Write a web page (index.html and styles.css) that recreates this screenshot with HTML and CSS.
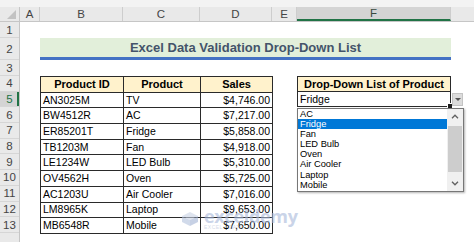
FILE: index.html
```html
<!DOCTYPE html>
<html lang="en">
<head>
    <meta charset="UTF-8">
    <meta name="viewport" content="width=device-width, initial-scale=1.0">
    <title>Excel Data Validation Drop-Down List</title>
    <link rel="stylesheet" href="styles.css">
</head>
<body>
    <div class="excel">
        <div class="colbar">
            <div class="corner"><span class="tri"></span></div>
            <div class="ch w-a">A</div>
            <div class="ch w-b">B</div>
            <div class="ch w-c">C</div>
            <div class="ch w-d">D</div>
            <div class="ch w-e">E</div>
            <div class="ch w-f selected">F</div>
            <div class="ch rest"></div>
        </div>

        <div class="main">
            <div class="rowheads">
                <div class="rh r-s">1</div>
                <div class="rh r-t">2</div>
                <div class="rh r-s">3</div>
                <div class="rh r-n">4</div>
                <div class="rh r-n selected">5</div>
                <div class="rh r-n">6</div>
                <div class="rh r-n">7</div>
                <div class="rh r-n">8</div>
                <div class="rh r-n">9</div>
                <div class="rh r-n">10</div>
                <div class="rh r-n">11</div>
                <div class="rh r-n">12</div>
                <div class="rh r-n">13</div>
                <div class="rh r-last"></div>
            </div>

            <div class="sheet">
                <div class="title">Excel Data Validation Drop-Down List</div>

                <table class="products">
                    <colgroup>
                        <col class="col-b">
                        <col class="col-c">
                        <col class="col-d">
                    </colgroup>
                    <thead>
                        <tr><th>Product ID</th><th>Product</th><th>Sales</th></tr>
                    </thead>
                    <tbody>
                        <tr><td>AN3025M</td><td>TV</td><td class="num">$4,746.00</td></tr>
                        <tr><td>BW4512R</td><td>AC</td><td class="num">$7,217.00</td></tr>
                        <tr><td>ER85201T</td><td>Fridge</td><td class="num">$5,858.00</td></tr>
                        <tr><td>TB1203M</td><td>Fan</td><td class="num">$4,918.00</td></tr>
                        <tr><td>LE1234W</td><td>LED Bulb</td><td class="num">$5,310.00</td></tr>
                        <tr><td>OV4562H</td><td>Oven</td><td class="num">$5,725.00</td></tr>
                        <tr><td>AC1203U</td><td>Air Cooler</td><td class="num">$7,016.00</td></tr>
                        <tr><td>LM8965K</td><td>Laptop</td><td class="num">$9,653.00</td></tr>
                        <tr><td>MB6548R</td><td>Mobile</td><td class="num">$7,650.00</td></tr>
                    </tbody>
                </table>

                <div class="dropdown">
                    <div class="dd-head">Drop-Down List of Product</div>
                    <div class="dd-cell">Fridge<span class="handle"></span></div>
                    <div class="dd-btn"><span class="caret"></span></div>

                    <div class="dd-list">
                        <ul class="options">
                            <li>AC</li>
                            <li class="active">Fridge</li>
                            <li>Fan</li>
                            <li>LED Bulb</li>
                            <li>Oven</li>
                            <li>Air Cooler</li>
                            <li>Laptop</li>
                            <li>Mobile</li>
                        </ul>
                        <div class="scrollbar">
                            <div class="arrow">
                                <svg width="8" height="5" viewBox="0 0 8 5"><path d="M1 4.2 L4 1.2 L7 4.2" fill="none" stroke="#606060" stroke-width="1.3"/></svg>
                            </div>
                            <div class="thumb"></div>
                            <div class="arrow">
                                <svg width="8" height="5" viewBox="0 0 8 5"><path d="M1 0.8 L4 3.8 L7 0.8" fill="none" stroke="#606060" stroke-width="1.3"/></svg>
                            </div>
                        </div>
                    </div>
                </div>

                <div class="watermark">
                    <svg class="logo" width="20" height="16" viewBox="0 0 20 16">
                        <path d="M10 1 L18 5 L10 9 L2 5 Z" fill="#c9d3e6"/>
                        <path d="M2 5 L10 9 L10 15 L2 11 Z" fill="#b4c2dd"/>
                        <path d="M18 5 L10 9 L10 15 L18 11 Z" fill="#a3b3d4"/>
                    </svg>
                    <div class="wm-text">
                        <span class="wm-name">exceldemy</span>
                        <span class="wm-tag">EXCEL · DATA · BI</span>
                    </div>
                </div>
            </div>
        </div>
    </div>
</body>
</html>
```

FILE: styles.css
```css
body {
    margin: 0;
    padding: 0;
    background: #fff;
    font-family: "Liberation Sans", Arial, sans-serif;
    color: #000;
}

.excel {
    width: 474px;
    height: 242px;
    overflow: hidden;
    background: #fff;
}

/* column header bar */
.colbar {
    display: flex;
    height: 22px;
    padding-top: 7px;
    box-sizing: border-box;
    background: #f3f3f3;
    border-bottom: 1px solid #c6c6c6;
}

.corner {
    width: 20px;
    position: relative;
    background: #e9e9e9;
    border-right: 1px solid #c6c6c6;
    box-sizing: border-box;
}

.tri {
    position: absolute;
    right: 3px;
    bottom: 2px;
    width: 0;
    height: 0;
    border-left: 9px solid transparent;
    border-bottom: 9px solid #c2c2c2;
}

.ch {
    display: flex;
    align-items: center;
    justify-content: center;
    box-sizing: border-box;
    background: #e9e9e9;
    border-right: 1px solid #cdcdcd;
    font-size: 11.5px;
    color: #444;
}

.ch.selected {
    background: #d4d4d4;
    border-bottom: 2px solid #217346;
    color: #3a4a40;
}

.ch.rest {
    flex: 1;
    border-right: none;
}

.w-a { width: 20px; }
.w-b { width: 83px; }
.w-c { width: 77px; }
.w-d { width: 72px; }
.w-e { width: 25px; }
.w-f { width: 154px; }

/* body */
.main {
    display: flex;
    height: 220px;
}

.rowheads {
    width: 20px;
    display: flex;
    flex-direction: column;
    background: #e9e9e9;
    border-right: 1px solid #c6c6c6;
    box-sizing: border-box;
}

.rh {
    display: flex;
    align-items: center;
    justify-content: center;
    box-sizing: border-box;
    border-bottom: 1px solid #d6d6d6;
    font-size: 11.5px;
    color: #444;
}

.rh.selected {
    background: #d4d4d4;
    color: #217346;
    box-shadow: inset -2px 0 0 #217346;
}

.r-s { height: 16px; }
.r-t { height: 22px; }
.r-n { height: 15.7px; }
.r-last { flex: 1; border-bottom: none; }

.sheet {
    flex: 1;
    position: relative;
    display: grid;
    grid-template-columns: 20px 83px 77px 72px 25px 154px 1fr;
    grid-template-rows: 16px 22px 16px repeat(10, 15.7px) 1fr;
}

.title {
    grid-column: 2 / 7;
    grid-row: 2;
    display: flex;
    align-items: center;
    justify-content: center;
    box-sizing: border-box;
    background: #e2efda;
    border-bottom: 3px solid #4472c4;
    font-size: 13px;
    font-weight: bold;
    color: #44546a;
}

/* product table */
.products {
    grid-column: 2 / 5;
    grid-row: 4 / 14;
    width: 232px;
    height: 157px;
    border-collapse: collapse;
    table-layout: fixed;
    font-size: 10.5px;
}

.col-b { width: 83px; }
.col-c { width: 77px; }
.col-d { width: 72px; }

.products th,
.products td {
    border: 1px solid #2a2a2a;
    padding: 0 2px;
    height: 14.7px;
    line-height: 13px;
    white-space: nowrap;
    overflow: hidden;
}

.products th {
    background: #fff2cc;
    font-size: 11px;
    font-weight: bold;
    text-align: center;
}

.products td {
    text-align: left;
}

.products td.num {
    text-align: right;
}

/* drop-down cell */
.dropdown {
    grid-column: 6;
    grid-row: 4 / 6;
    position: relative;
}

.dd-head {
    height: 15.7px;
    box-sizing: border-box;
    border: 1px solid #2a2a2a;
    background: #fff2cc;
    font-size: 11px;
    font-weight: bold;
    text-align: center;
    line-height: 14px;
}

.dd-cell {
    position: relative;
    height: 15.7px;
    box-sizing: border-box;
    border: 1px solid #2a2a2a;
    border-top: none;
    padding-left: 2px;
    font-size: 10.5px;
    line-height: 15px;
}

.handle {
    position: absolute;
    right: -3px;
    bottom: -3px;
    width: 4px;
    height: 4px;
    background: #1e1e1e;
    border: 1px solid #fff;
}

.dd-btn {
    position: absolute;
    left: 155px;
    top: 17px;
    width: 11px;
    height: 13px;
    display: flex;
    align-items: center;
    justify-content: center;
    background: #dcdcdc;
    border: 1px solid #c4c4c4;
    box-sizing: border-box;
}

.caret {
    width: 0;
    height: 0;
    border-left: 3px solid transparent;
    border-right: 3px solid transparent;
    border-top: 3px solid #555;
}

.dd-list {
    position: absolute;
    left: 0;
    top: 31.5px;
    width: 167px;
    height: 84px;
    box-sizing: border-box;
    display: flex;
    background: #fff;
    border: 1px solid #777;
    box-shadow: 1px 1px 2px rgba(0, 0, 0, 0.3);
    z-index: 2;
}

.options {
    flex: 1;
    list-style: none;
    margin: 0;
    padding: 0;
    font-size: 9.3px;
}

.options li {
    height: 10.2px;
    line-height: 10.2px;
    padding-left: 2px;
}

.options li.active {
    background: #0078d7;
    color: #fff;
}

.scrollbar {
    width: 16px;
    display: flex;
    flex-direction: column;
    background: #f0f0f0;
}

.arrow {
    height: 15px;
    display: flex;
    align-items: center;
    justify-content: center;
}

.thumb {
    flex: 1;
    margin: 2px 1px 4px;
    background: #cdcdcd;
}

/* watermark */
.watermark {
    position: absolute;
    left: 160px;
    top: 185px;
    display: flex;
    align-items: center;
    gap: 4px;
    opacity: 0.6;
    pointer-events: none;
}

.wm-text {
    display: flex;
    flex-direction: column;
    line-height: 1;
}

.wm-name {
    font-family: "Open Sans", sans-serif;
    font-size: 18px;
    font-weight: bold;
    color: #a7b8da;
    letter-spacing: -0.3px;
}

.wm-tag {
    font-size: 5px;
    color: #b9c4da;
    letter-spacing: 0.5px;
}
```
